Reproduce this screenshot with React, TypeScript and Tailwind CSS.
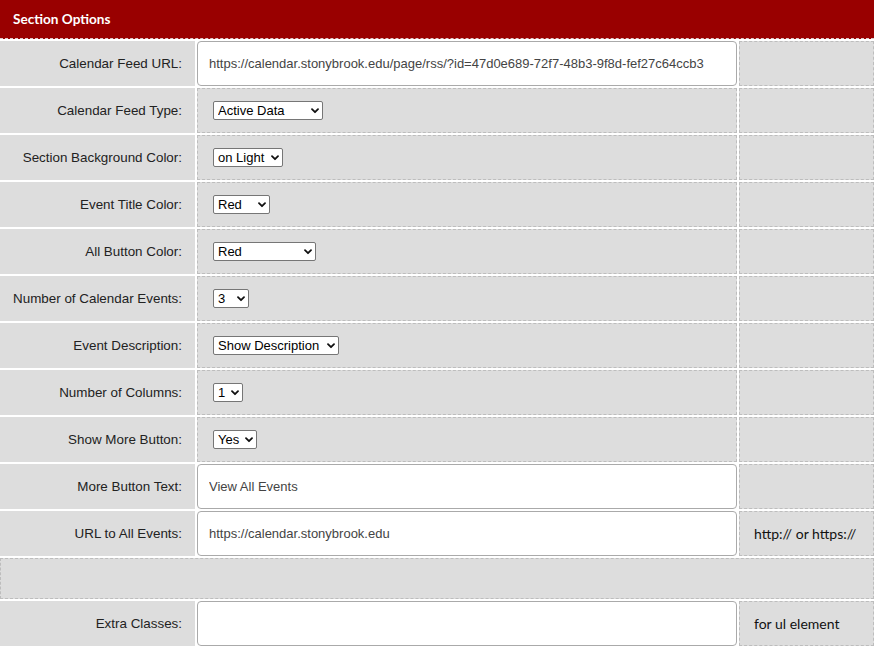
type Row =
  | { label: string; kind: 'input'; value: string; hint?: string }
  | { label: string; kind: 'select'; value: string; width: string; hint?: string }

const rows: Row[] = [
  {
    label: 'Calendar Feed URL:',
    kind: 'input',
    value: 'https://calendar.stonybrook.edu/page/rss/?id=47d0e689-72f7-48b3-9f8d-fef27c64ccb3'
  },
  { label: 'Calendar Feed Type:', kind: 'select', value: 'Active Data', width: 'w-[110px]' },
  { label: 'Section Background Color:', kind: 'select', value: 'on Light', width: 'w-[70px]' },
  { label: 'Event Title Color:', kind: 'select', value: 'Red', width: 'w-[57px]' },
  { label: 'All Button Color:', kind: 'select', value: 'Red', width: 'w-[103px]' },
  { label: 'Number of Calendar Events:', kind: 'select', value: '3', width: 'w-[36px]' },
  { label: 'Event Description:', kind: 'select', value: 'Show Description', width: 'w-[126px]' },
  { label: 'Number of Columns:', kind: 'select', value: '1', width: 'w-[30px]' },
  { label: 'Show More Button:', kind: 'select', value: 'Yes', width: 'w-[44px]' },
  { label: 'More Button Text:', kind: 'input', value: 'View All Events' },
  { label: 'URL to All Events:', kind: 'input', value: 'https://calendar.stonybrook.edu', hint: 'http:// or https://' }
]

const labelFont = "font-['Liberation_Sans',Arial,sans-serif]"
const hintFont = "font-['Lato','Open_Sans',sans-serif]"

function Chevron() {
  return (
    <svg
      className="pointer-events-none absolute right-[4px] top-1/2 -translate-y-1/2"
      width="8"
      height="6"
      viewBox="0 0 8 6"
      fill="none"
    >
      <path d="M1 1.2 L4 4.2 L7 1.2" stroke="#111" strokeWidth="1.8" strokeLinecap="round" strokeLinejoin="round" />
    </svg>
  )
}

function FakeSelect({ value, width }: { value: string; width: string }) {
  return (
    <span className={`relative inline-block ${width}`}>
      <select
        defaultValue={value}
        className={`block w-full h-[19px] appearance-none rounded-[2px] border border-[#767676] bg-white pl-[4px] pr-[14px] text-[13px] leading-[17px] text-black ${labelFont}`}
      >
        <option>{value}</option>
      </select>
      <Chevron />
    </span>
  )
}

function Label({ text }: { text: string }) {
  return (
    <div
      className={`flex h-[45px] items-center justify-end bg-[#dddddd] pr-[13px] pt-[1px] text-[13.4px] text-[#222] ${labelFont}`}
    >
      {text}
    </div>
  )
}

function Hint({ text }: { text?: string }) {
  return (
    <div
      className={`flex h-[45px] items-center border border-dashed border-[#bdbdbd] bg-[#dddddd] pl-[14px] text-[14px] font-normal text-[#111] ${hintFont}`}
    >
      {text}
    </div>
  )
}

function TextField({ value }: { value: string }) {
  return (
    <input
      readOnly
      value={value}
      className={`h-[45px] w-full rounded-[4px] border border-[#aaaaaa] bg-white px-[11px] text-[13px] text-[#444] outline-none ${labelFont}`}
    />
  )
}

export default function App() {
  return (
    <div className="w-[874px] bg-white">
      {/* header bar */}
      <div
        className={`flex h-[39px] items-center border-b border-dashed border-[#e0c8c8] bg-[#990000] pl-[13px] text-[13.6px] font-bold text-white ${hintFont}`}
      >
        Section Options
      </div>

      <div className="mt-[2px] grid grid-cols-[195px_540px_1fr] gap-[2px]">
        {rows.map((row) => (
          <div key={row.label} className="contents">
            <Label text={row.label} />
            {row.kind === 'input' ? (
              <TextField value={row.value} />
            ) : (
              <div className="flex h-[45px] items-center border border-dashed border-[#bdbdbd] bg-[#dddddd] pl-[15px]">
                <FakeSelect value={row.value} width={row.width} />
              </div>
            )}
            <Hint text={row.hint} />
          </div>
        ))}

        {/* spacer row across all columns */}
        <div className="col-span-3 h-[41px] border border-dashed border-[#bdbdbd] bg-[#dddddd]" />

        <Label text="Extra Classes:" />
        <TextField value="" />
        <Hint text="for ul element" />
      </div>
    </div>
  )
}
